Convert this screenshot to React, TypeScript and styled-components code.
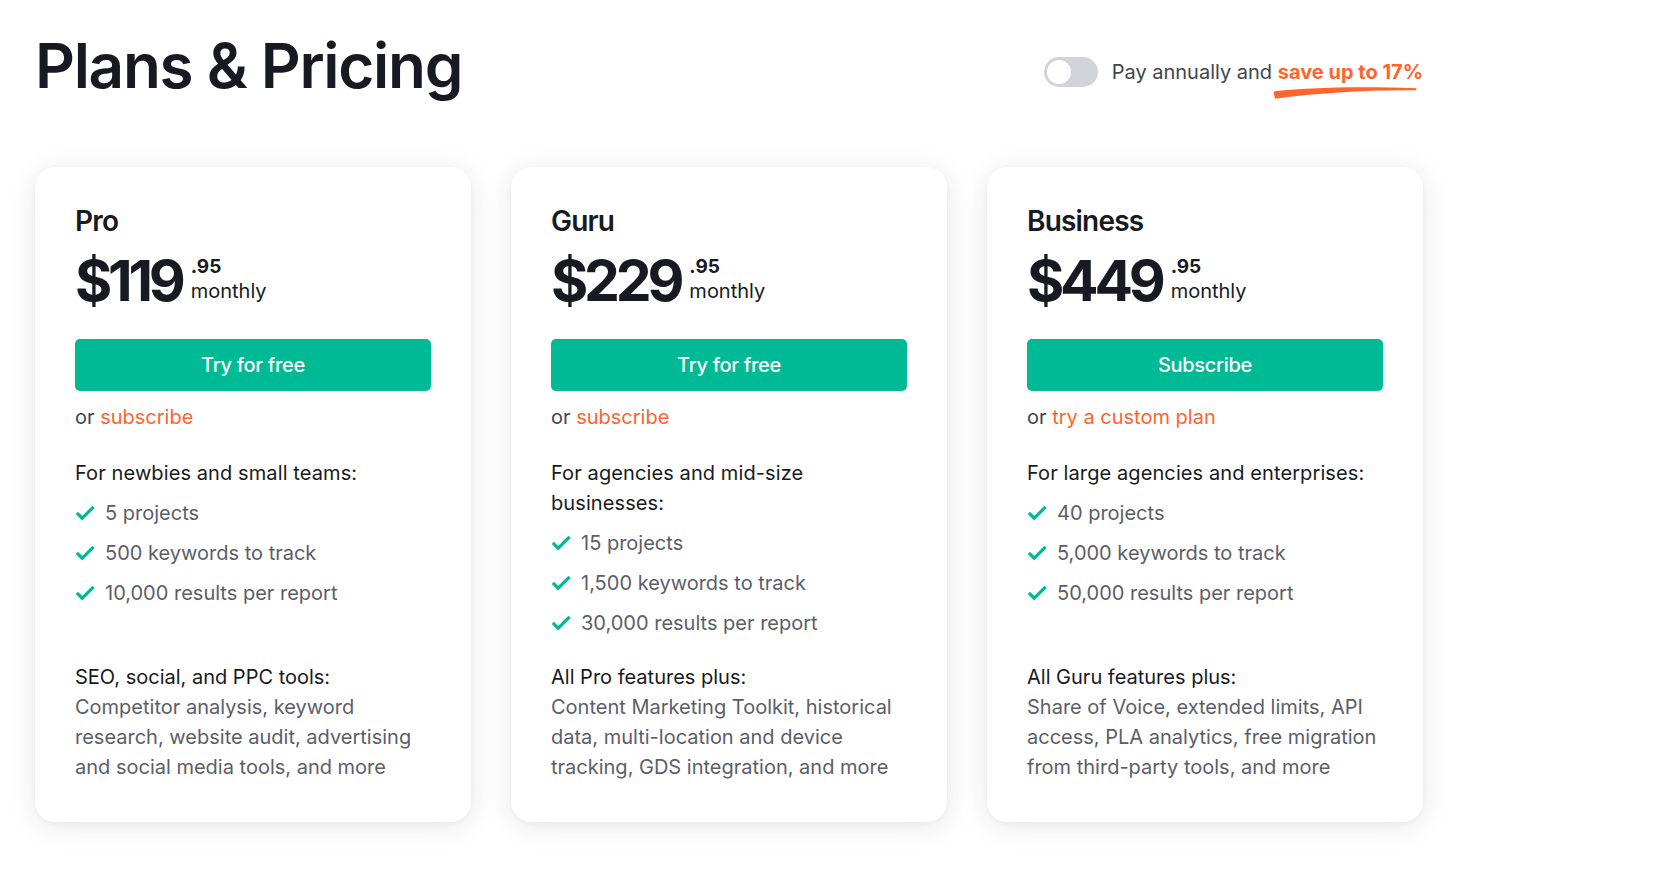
import React from "react";
import styled, { createGlobalStyle } from "styled-components";

const GlobalStyle = createGlobalStyle`
  html, body { margin: 0; padding: 0; background: #ffffff; }
  body { font-family: Inter, "Noto Sans", Arial, sans-serif; color: #171a22; }
  * { box-sizing: border-box; }
`;

const Page = styled.div`
  width: 1678px;
  min-height: 879px;
  padding: 34px 0 0 35px;
`;

const Header = styled.header`
  width: 1388px;
  display: flex;
  justify-content: space-between;
  align-items: flex-start;
  margin-bottom: 69px;
`;

const Title = styled.h1`
  margin: 0;
  font-family: Inter, sans-serif;
  font-weight: 600;
  font-size: 62px;
  line-height: 64px;
  letter-spacing: -1.3px;
  color: #171a22;
`;

const BillingToggle = styled.div`
  display: flex;
  align-items: center;
  gap: 14px;
  margin-top: 23px;
`;

const Switch = styled.button`
  width: 54px;
  height: 30px;
  border-radius: 15px;
  border: none;
  padding: 0 0 0 3px;
  background: #d1d4db;
  display: flex;
  align-items: center;
  cursor: pointer;
`;

const Knob = styled.span`
  width: 24px;
  height: 24px;
  border-radius: 50%;
  background: #ffffff;
  display: block;
`;

const ToggleText = styled.span`
  font-size: 20px;
  line-height: 24px;
  color: #41454f;
`;

const Save = styled.span`
  position: relative;
  font-weight: 700;
  color: #ff642d;
`;

const Swoosh = styled.svg`
  position: absolute;
  left: -5px;
  top: 26px;
  width: 144px;
  height: 13px;
`;

const Cards = styled.div`
  display: grid;
  grid-template-columns: repeat(3, 436px);
  gap: 40px;
`;

const Card = styled.section`
  background: #ffffff;
  border-radius: 20px;
  padding: 40px;
  box-shadow: 0 4px 28px rgba(33, 38, 56, 0.11), 0 1px 4px rgba(33, 38, 56, 0.04);
  display: flex;
  flex-direction: column;
`;

const PlanName = styled.h2`
  margin: 0;
  font-weight: 600;
  font-size: 28px;
  line-height: 28px;
  letter-spacing: -0.8px;
  color: #171a22;
`;

const PriceRow = styled.div`
  display: flex;
  align-items: flex-start;
  gap: 9px;
  margin-top: 17px;
  height: 58px;
`;

const Amount = styled.span`
  font-weight: 700;
  font-size: 57px;
  line-height: 58px;
  letter-spacing: -4.2px;
  color: #171a22;
`;

const Cents = styled.div`
  display: flex;
  flex-direction: column;
  margin-top: 3px;
`;

const CentsValue = styled.span`
  font-weight: 700;
  font-size: 19px;
  line-height: 24px;
  color: #171a22;
`;

const Period = styled.span`
  font-weight: 400;
  font-size: 20px;
  line-height: 25px;
  color: #171a22;
`;

const CTA = styled.button`
  margin-top: 29px;
  height: 52px;
  width: 100%;
  border: none;
  border-radius: 5px;
  background: #00ba96;
  color: #ffffff;
  font-family: Inter, sans-serif;
  font-size: 20px;
  font-weight: 500;
  letter-spacing: -0.3px;
  cursor: pointer;
`;

const AltLine = styled.p`
  margin: 11px 0 0;
  font-size: 20px;
  line-height: 30px;
  color: #41454f;
`;

const AltLink = styled.a`
  color: #ff642d;
  text-decoration: none;
`;

const Features = styled.div`
  margin-top: 26px;
  min-height: 180px;
`;

const Lead = styled.p`
  margin: 0;
  font-size: 20px;
  line-height: 30px;
  letter-spacing: 0.1px;
  color: #171a22;
`;

const List = styled.ul`
  list-style: none;
  margin: 0;
  padding: 0;
`;

const Item = styled.li`
  display: flex;
  align-items: center;
  gap: 10px;
  margin-top: 10px;
  font-size: 20px;
  line-height: 30px;
  color: #5b5e68;
`;

const Check = styled.svg`
  width: 20px;
  height: 16px;
  flex: none;
`;

const Extras = styled.div`
  margin-top: 24px;
  font-size: 20px;
  line-height: 30px;
`;

const ExtrasTitle = styled.div`
  color: #171a22;
`;

const ExtrasText = styled.div`
  color: #5b5e68;
`;

type Plan = {
  name: string;
  dollars: string;
  cta: string;
  alt: string;
  lead: string;
  items: string[];
  extrasTitle: string;
  extras: string;
};

const plans: Plan[] = [
  {
    name: "Pro",
    dollars: "$119",
    cta: "Try for free",
    alt: "subscribe",
    lead: "For newbies and small teams:",
    items: ["5 projects", "500 keywords to track", "10,000 results per report"],
    extrasTitle: "SEO, social, and PPC tools:",
    extras: "Competitor analysis, keyword research, website audit, advertising and social media tools, and more",
  },
  {
    name: "Guru",
    dollars: "$229",
    cta: "Try for free",
    alt: "subscribe",
    lead: "For agencies and mid-size businesses:",
    items: ["15 projects", "1,500 keywords to track", "30,000 results per report"],
    extrasTitle: "All Pro features plus:",
    extras: "Content Marketing Toolkit, historical data, multi-location and device tracking, GDS integration, and more",
  },
  {
    name: "Business",
    dollars: "$449",
    cta: "Subscribe",
    alt: "try a custom plan",
    lead: "For large agencies and enterprises:",
    items: ["40 projects", "5,000 keywords to track", "50,000 results per report"],
    extrasTitle: "All Guru features plus:",
    extras: "Share of Voice, extended limits, API access, PLA analytics, free migration from third-party tools, and more",
  },
];

const CheckIcon = () => (
  <Check viewBox="0 0 20 16" fill="none">
    <path d="M1.8 7.8 L7.2 13.2 L18.6 1.8" stroke="#00ba96" strokeWidth="3.2" strokeLinecap="butt" strokeLinejoin="miter" />
  </Check>
);

export default function App() {
  return (
    <>
      <GlobalStyle />
      <Page>
        <Header>
          <Title>Plans &amp; Pricing</Title>
          <BillingToggle>
            <Switch aria-label="Pay annually">
              <Knob />
            </Switch>
            <ToggleText>
              Pay annually and{" "}
              <Save>
                save up to 17%
                <Swoosh viewBox="0 0 144 13" aria-hidden="true">
                  <path
                    d="M0.5 5.5 C 30 2, 80 0, 143.5 2.3 L 143 4.3 C 95 3.8, 45 6.8, 2 12.8 Z"
                    fill="#ff642d"
                  />
                </Swoosh>
              </Save>
            </ToggleText>
          </BillingToggle>
        </Header>
        <Cards>
          {plans.map((p) => (
            <Card key={p.name}>
              <PlanName>{p.name}</PlanName>
              <PriceRow>
                <Amount>{p.dollars}</Amount>
                <Cents>
                  <CentsValue>.95</CentsValue>
                  <Period>monthly</Period>
                </Cents>
              </PriceRow>
              <CTA>{p.cta}</CTA>
              <AltLine>
                or <AltLink href="#">{p.alt}</AltLink>
              </AltLine>
              <Features>
                <Lead>{p.lead}</Lead>
                <List>
                  {p.items.map((it) => (
                    <Item key={it}>
                      <CheckIcon />
                      {it}
                    </Item>
                  ))}
                </List>
              </Features>
              <Extras>
                <ExtrasTitle>{p.extrasTitle}</ExtrasTitle>
                <ExtrasText>{p.extras}</ExtrasText>
              </Extras>
            </Card>
          ))}
        </Cards>
      </Page>
    </>
  );
}
